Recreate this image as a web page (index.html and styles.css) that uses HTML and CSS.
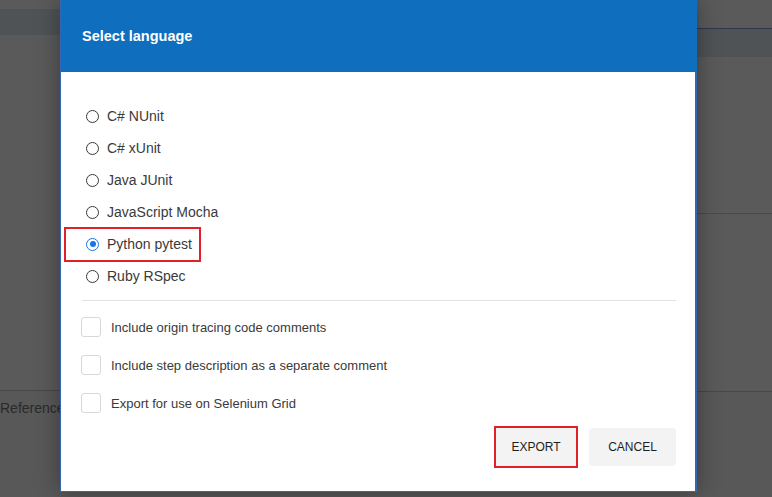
FILE: index.html
```html
<!DOCTYPE html>
<html>
<head>
<meta charset="utf-8">
<link rel="stylesheet" href="styles.css">
</head>
<body>
<div class="page">
  <div class="pane-left">
    <div class="lt-top"></div>
    <div class="lt-band"></div>
    <div class="lt-fill"></div>
    <div class="ref-row">Reference</div>
    <div class="lt-rest"></div>
  </div>
  <div class="pane-right">
    <div class="rt-top"></div>
    <div class="rt-band"></div>
    <div class="rt-fill1"></div>
    <div class="rt-fill2"></div>
    <div class="rt-fill3"></div>
  </div>
</div>

<div class="dialog">
  <div class="dialog-header">Select language</div>
  <div class="dialog-body">
    <div class="radio-list">
      <label class="radio-row"><span class="radio"></span><span class="radio-label">C# NUnit</span></label>
      <label class="radio-row"><span class="radio"></span><span class="radio-label">C# xUnit</span></label>
      <label class="radio-row"><span class="radio"></span><span class="radio-label">Java JUnit</span></label>
      <label class="radio-row"><span class="radio"></span><span class="radio-label">JavaScript Mocha</span></label>
      <label class="radio-row selected highlight"><span class="radio checked"></span><span class="radio-label">Python pytest</span></label>
      <label class="radio-row"><span class="radio"></span><span class="radio-label">Ruby RSpec</span></label>
    </div>
    <div class="separator"></div>
    <div class="check-list">
      <label class="check-row"><span class="checkbox"></span><span class="check-label">Include origin tracing code comments</span></label>
      <label class="check-row"><span class="checkbox"></span><span class="check-label">Include step description as a separate comment</span></label>
      <label class="check-row"><span class="checkbox"></span><span class="check-label">Export for use on Selenium Grid</span></label>
    </div>
    <div class="actions">
      <button class="btn btn-export">EXPORT</button>
      <button class="btn">CANCEL</button>
    </div>
  </div>
</div>
</body>
</html>
```

FILE: styles.css
```css
html, body {
  margin: 0;
  padding: 0;
  width: 772px;
  height: 497px;
  overflow: hidden;
  background: #5a5a5a;
  font-family: "Liberation Sans", Arial, sans-serif;
}

.page {
  display: flex;
  width: 772px;
  height: 497px;
}

.pane-left {
  width: 200px;
  display: flex;
  flex-direction: column;
}
.lt-top { height: 9px; background: #5a5a5a; }
.lt-band { height: 26px; background: #505356; }
.lt-fill { height: 355px; background: #5a5a5a; border-bottom: 1px solid #474747; }
.ref-row {
  height: 34px;
  line-height: 34px;
  font-size: 14px;
  color: #2a2a2a;
  background: #585858;
}
.lt-rest { flex: 1; background: #585858; }

.pane-right {
  flex: 1;
  display: flex;
  flex-direction: column;
}
.rt-top { height: 28px; background: #5a5a5a; border-bottom: 1px solid #2e384c; }
.rt-band { height: 28px; background: #4f5355; }
.rt-fill1 { height: 156px; background: #5a5a5a; border-bottom: 1px solid #4a4a4a; }
.rt-fill2 { height: 177px; background: #5a5a5a; border-bottom: 1px solid #484848; }
.rt-fill3 { flex: 1; background: #585858; }

.dialog {
  position: absolute;
  left: 60px;
  top: 0;
  width: 634px;
  height: 491px;
  background: #fff;
  border-left: 1px solid #3466b4;
  border-right: 2px solid #3466b4;
  border-bottom: 1px solid #3466b4;
  box-shadow: 0 0 22px rgba(0, 0, 0, 0.35);
  display: flex;
  flex-direction: column;
}

.dialog-header {
  height: 72px;
  background: #106ebe;
  color: #fff;
  font-weight: bold;
  font-size: 14.5px;
  line-height: 72px;
  padding-left: 21px;
  margin-right: -2px;
  flex-shrink: 0;
}

.dialog-body {
  display: flex;
  flex-direction: column;
  padding: 28px 19px 0 0;
}

.radio-list {
  display: flex;
  flex-direction: column;
  align-items: flex-start;
  padding-left: 25px;
}

.radio-row {
  height: 32px;
  display: flex;
  align-items: center;
  gap: 8px;
  position: relative;
}

.radio {
  width: 11px;
  height: 11px;
  border: 1.5px solid #3a3a3a;
  border-radius: 50%;
  position: relative;
  background: #fff;
}
.radio.checked { border-color: #1a73e8; }
.radio.checked::after {
  content: "";
  position: absolute;
  left: 2.5px;
  top: 2.5px;
  width: 6px;
  height: 6px;
  border-radius: 50%;
  background: #1a73e8;
}

.radio-label {
  font-size: 14px;
  color: #3a3a3a;
}

.highlight::after {
  content: "";
  position: absolute;
  top: -1px;
  bottom: -2px;
  left: -22px;
  right: -9px;
  border: 2px solid #e1202a;
}

.separator {
  height: 1px;
  background: #e3e3e3;
  margin: 8px 0 0 21px;
}

.check-list {
  display: flex;
  flex-direction: column;
  margin-top: 7px;
  padding-left: 20px;
}

.check-row {
  height: 38px;
  display: flex;
  align-items: center;
  gap: 10px;
}

.checkbox {
  width: 18px;
  height: 18px;
  border: 1px solid #d8d8d8;
  border-radius: 3px;
  background: #fff;
}

.check-label {
  font-size: 13px;
  color: #3a3a3a;
}

.actions {
  display: flex;
  justify-content: flex-end;
  gap: 13px;
  margin-top: 6px;
}

.btn {
  height: 38px;
  border: none;
  border-radius: 4px;
  background: #f3f3f3;
  font-family: "Liberation Sans", Arial, sans-serif;
  font-size: 12px;
  color: #1e1e1e;
  padding: 0;
  width: 87px;
}
.btn-export {
  width: 80px;
  outline: 2px solid #e1202a;
  border-radius: 0;
}
```
